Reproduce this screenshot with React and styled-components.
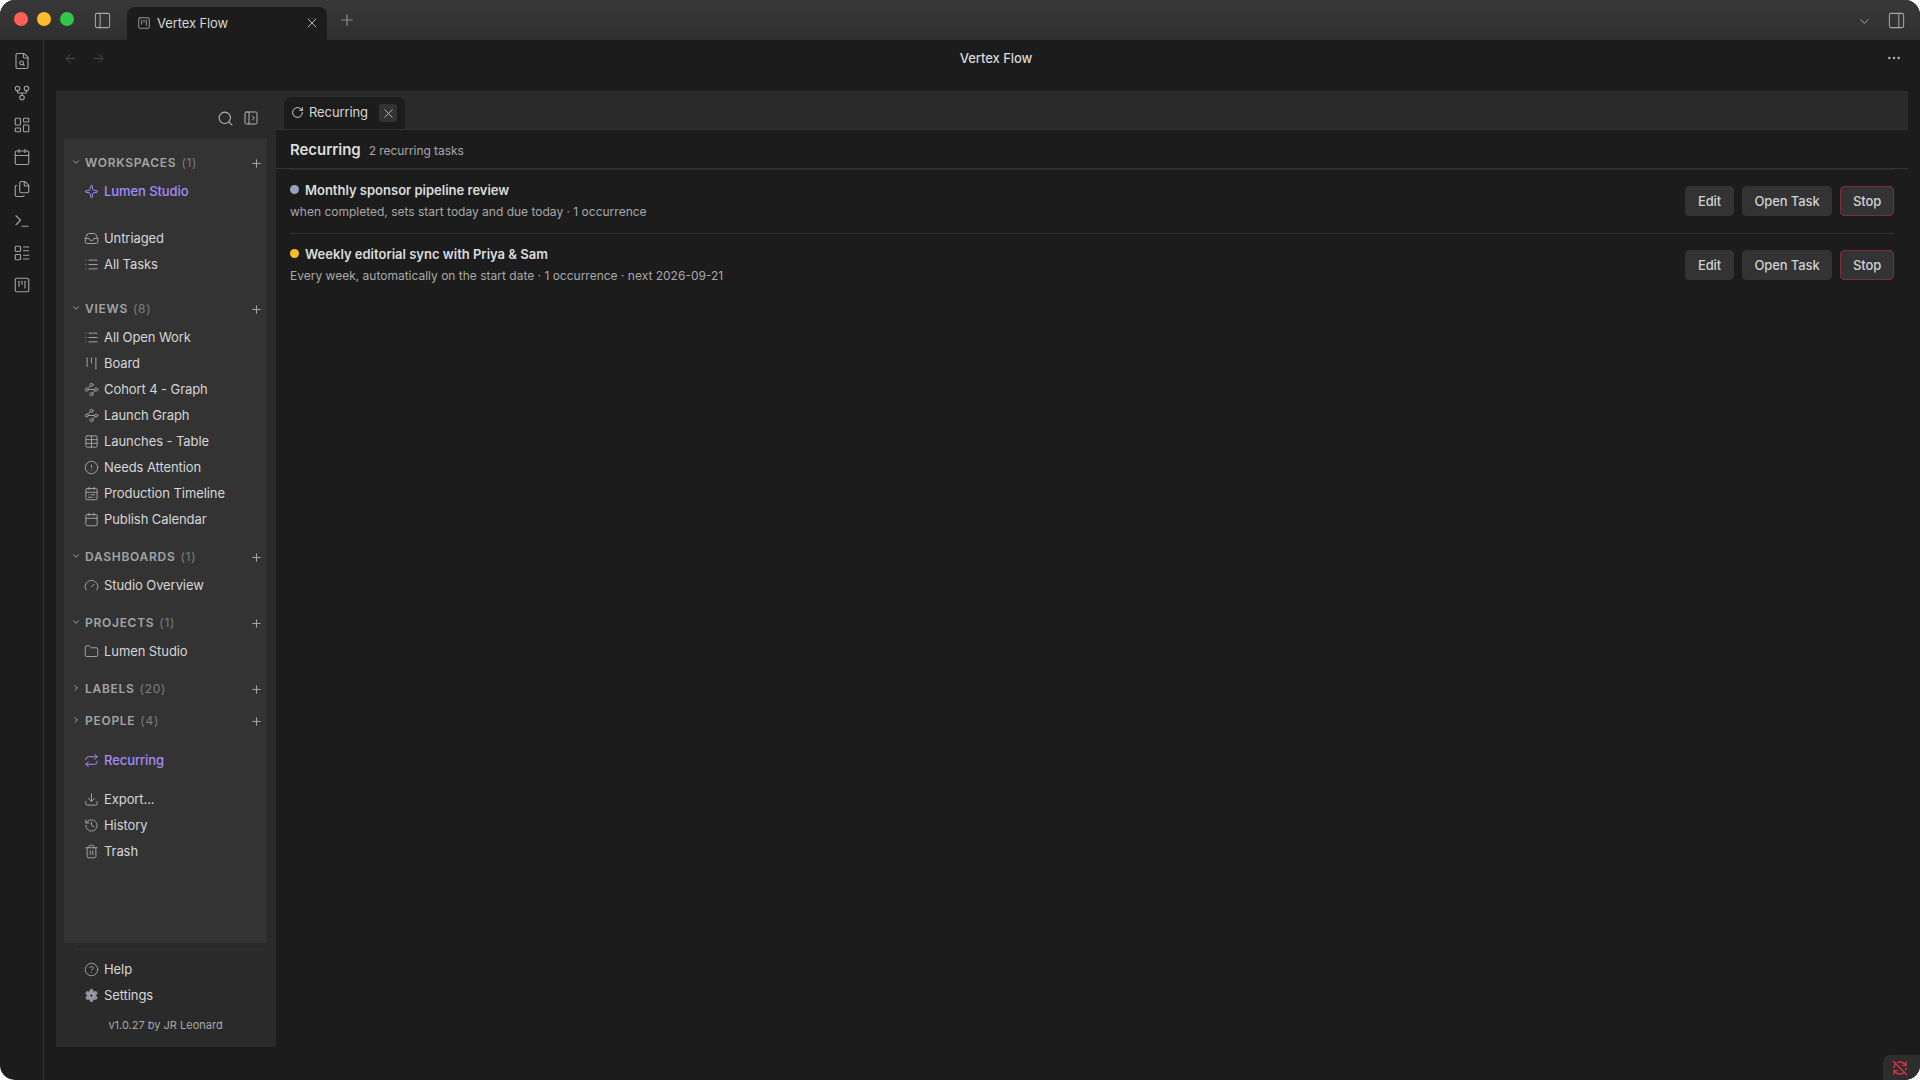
import React from "react";
import styled, { createGlobalStyle } from "styled-components";
import {
  FileSearch, GitFork, LayoutDashboard, Calendar, Files, Terminal, LayoutList, SquareKanban,
  PanelLeft, PanelRight, PanelLeftOpen, X, Plus, ChevronDown, ChevronRight, ArrowLeft, ArrowRight,
  MoreHorizontal, Search, Sparkle, Inbox, List, Kanban, Waypoints, Table, CircleAlert, CalendarRange,
  Gauge, Folder, Repeat, Download, History, Trash2, CircleHelp, Settings, RotateCw, RefreshCwOff,
} from "lucide-react";

const Global = createGlobalStyle`
  html, body { margin: 0; padding: 0; background: #fff; height: 100%; }
  * { box-sizing: border-box; }
  #root { height: 100%; }
  body { font-family: Inter, "Noto Sans", "Liberation Sans", sans-serif; -webkit-font-smoothing: antialiased; }
`;

const Window = styled.div`
  position: relative; width: 1920px; height: 1080px; border-radius: 15px; overflow: hidden;
  background: #1c1c1c; color: #dcdcdc; display: flex; flex-direction: column;
`;
const TitleBar = styled.header`
  height: 40px; flex: none; display: flex; align-items: flex-end; padding: 0 14px 0 14px;
  background: linear-gradient(#383838, #2f2f2f); color: #a8a8a8;
`;
const Lights = styled.div`display: flex; gap: 9px; align-self: center; margin-top: -2px; margin-right: 19px;`;
const Light = styled.span`width: 14px; height: 14px; border-radius: 50%; background: ${p => p.$c};`;
const BarButton = styled.span`
  display: flex; align-items: center; align-self: center; justify-content: center;
  margin-top: ${p => p.$mt || 0}px; margin-left: ${p => p.$ml || 0}px;
`;
const WinTab = styled.div`
  width: 200px; height: 33px; margin-left: 15px; background: #1c1c1c; border-radius: 8px 8px 0 0;
  display: flex; align-items: center; padding: 0 7px 2px 10px; gap: 6px; font-size: 13px;
  letter-spacing: -0.1px; color: #d6d6d6;
`;
const TabLabel = styled.span`flex: 1; white-space: nowrap;`;
const NewTab = styled.span`display: flex; align-self: center; margin-left: 11px; color: #8c8c8c;`;
const Spacer = styled.div`flex: 1;`;
const Body = styled.div`flex: 1; display: flex; min-height: 0;`;
const Rail = styled.nav`
  width: 44px; flex: none; border-right: 1px solid #333; padding: 5px 0 0 1px;
  display: flex; flex-direction: column; color: #a2a2a2;
`;
const RailItem = styled.span`height: 32px; display: flex; align-items: center; justify-content: center;`;
const Main = styled.div`flex: 1; min-width: 0; display: flex; flex-direction: column;`;
const NavRow = styled.div`
  height: 51px; flex: none; display: grid; grid-template-columns: 1fr auto 1fr; align-items: center;
  padding: 0 18px 15px 46px;
`;
const NavArrows = styled.div`display: flex; gap: 13px; color: #4e4e4e; margin-left: -27px;`;
const NavTitle = styled.div`font-size: 13px; font-weight: 500; letter-spacing: -0.05px; color: #d8d8d8;`;
const NavMore = styled.div`justify-self: end; display: flex; color: #b0b0b0;`;
const Workspace = styled.div`flex: 1; min-height: 0; display: flex; margin: 0 12px 33px 12px;`;
const Sidebar = styled.aside`
  width: 220px; flex: none; background: #2a2a2a; display: flex; flex-direction: column;
  padding: 0 9px 0 8px;
`;
const SideHead = styled.div`
  height: 48px; flex: none; display: flex; align-items: center; justify-content: flex-end;
  gap: 9px; padding: 6px 8px 0 0; color: #b4b4b4;
`;
const Card = styled.div`flex: 1; min-height: 0; background: #333; padding-top: 10px;`;
const SectionHead = styled.div`
  height: 26px; display: flex; align-items: center; padding: 0 4px 0 6px;
  margin-top: ${p => p.$mt || 0}px; margin-bottom: ${p => p.$mb ?? 3}px; color: #a4a4a4;
`;
const HeadChevron = styled.span`width: 11px; display: flex; justify-content: center; margin-right: 4px;`;
const HeadLabel = styled.span`font-size: 12px; font-weight: 600; letter-spacing: 0.06em;`;
const HeadCount = styled.span`font-size: 12px; color: #7e7e7e; letter-spacing: 0.06em; margin-left: 5px; flex: 1;`;
const HeadPlus = styled.span`display: flex; margin-top: 2px;`;
const Item = styled.div`
  height: 26px; display: flex; align-items: center; padding-left: 20px; gap: 5px; font-size: 13px;
  letter-spacing: -0.08px;
  margin-top: ${p => p.$mt || 0}px; color: ${p => (p.$active ? "#a68af9" : "#d6d6d6")};
  font-weight: ${p => (p.$active ? 500 : 400)};
  svg { color: ${p => (p.$active ? "#a68af9" : "#a0a0a0")}; flex: none; }
`;
const Foot = styled.div`flex: none; height: 104px; padding-top: 6px;`;
const Divider = styled.div`height: 1px; background: #333; margin: 0 2px 6px 10px;`;
const GearIcon = styled(Settings)`
  color: #8f959e !important; fill: #8f959e;
  circle { fill: #2a2a2a; stroke: #c0c4ca; }
`;
const Version = styled.div`font-size: 11px; color: #a8a8a8; text-align: center; margin-top: 10px;`;
const Content = styled.main`flex: 1; min-width: 0; display: flex; flex-direction: column;`;
const TabStrip = styled.div`
  height: 39px; flex: none; background: #2a2a2a; border-bottom: 1px solid #333; padding: 6px 0 0 8px; display: flex;
`;
const PaneTab = styled.div`
  width: 121px; background: #1c1c1c; border-radius: 8px 8px 0 0; display: flex; align-items: center;
  padding: 0 8px 2px 7px; gap: 5px; font-size: 13px; letter-spacing: -0.1px; color: #d6d6d6;
`;
const CloseBox = styled.span`
  width: 18px; height: 18px; background: #333; border-radius: 3px; display: flex; align-items: center;
  justify-content: center; color: #b4b4b4; margin-top: 2px;
`;
const PageHead = styled.div`
  height: 39px; flex: none; display: flex; align-items: center; gap: 8px; padding: 0 14px;
  border-bottom: 1px solid #333;
`;
const PageTitle = styled.h1`margin: 0; font-size: 15px; font-weight: 600; letter-spacing: -0.05px; color: #dcdcdc;`;
const PageCount = styled.span`font-size: 12px; letter-spacing: -0.05px; color: #a8a8a8; margin-top: 2px;`;
const Rows = styled.div`margin: 0 14px; border-top: 1px solid #2a2a2a;`;
const Row = styled.div`
  height: 64px; display: flex; align-items: center; justify-content: space-between;
  border-bottom: 1px solid ${p => (p.$last ? "transparent" : "#333")};
`;
const RowText = styled.div`display: flex; flex-direction: column; gap: 6px; margin-top: -3px;`;
const RowTitle = styled.div`display: flex; align-items: center; gap: 6px; font-size: 13px; font-weight: 600; color: #dcdcdc;`;
const Dot = styled.span`width: 9px; height: 9px; border-radius: 50%; background: ${p => p.$c};`;
const RowSub = styled.div`font-size: 12px; color: #a8a8a8; white-space: nowrap;`;
const Actions = styled.div`display: flex; gap: 8px; margin-top: -1px;`;
const Btn = styled.button`
  height: 30px; padding: 0; border-radius: 4px; font: 500 13px Inter, sans-serif; letter-spacing: -0.1px; color: #d0d0d0;
  background: #333; border: 1px solid ${p => (p.$danger ? "#7c2f37" : "#333")}; white-space: nowrap;
  width: ${p => p.$w}px; display: flex; align-items: center; justify-content: center;
`;
const SyncBadge = styled.div`
  position: absolute; right: 0; bottom: 0; width: 37px; height: 25px; background: #2d2d2d; padding-right: 3px;
  border-top-left-radius: 7px; display: flex; align-items: center; justify-content: center; color: #e0314b;
`;

const railIcons = [FileSearch, GitFork, LayoutDashboard, Calendar, Files, Terminal, LayoutList, SquareKanban];
const views = [
  [List, "All Open Work"], [Kanban, "Board"], [Waypoints, "Cohort 4 - Graph"], [Waypoints, "Launch Graph"],
  [Table, "Launches - Table"], [CircleAlert, "Needs Attention"], [CalendarRange, "Production Timeline"], [Calendar, "Publish Calendar"],
];
const rows = [
  { c: "#97a3bd", t: "Monthly sponsor pipeline review", s: "when completed, sets start today and due today · 1 occurrence" },
  { c: "#f5bd2a", t: "Weekly editorial sync with Priya & Sam", s: "Every week, automatically on the start date · 1 occurrence · next 2026-09-21" },
];

const Entry = ({ icon: Icon, label, active, mt }) => (
  <Item $active={active} $mt={mt}><Icon size={15} strokeWidth={1.6} />{label}</Item>
);
const Head = ({ label, count, open = true, mt, mb }) => (
  <SectionHead $mt={mt} $mb={mb}>
    <HeadChevron>{open ? <ChevronDown size={10} strokeWidth={2.4} /> : <ChevronRight size={10} strokeWidth={2.4} />}</HeadChevron>
    <HeadLabel>{label}</HeadLabel>
    <HeadCount>({count})</HeadCount>
    <HeadPlus><Plus size={13} strokeWidth={2} /></HeadPlus>
  </SectionHead>
);

export default function App() {
  return (
    <Window>
      <Global />
      <TitleBar>
        <Lights>
          <Light $c="#fe5f57" /><Light $c="#febc2e" /><Light $c="#30c84a" />
        </Lights>
        <BarButton><PanelLeft size={19} strokeWidth={1.3} /></BarButton>
        <WinTab>
          <SquareKanban size={14} strokeWidth={1.5} color="#a8a8a8" />
          <TabLabel>Vertex Flow</TabLabel>
          <X size={16} strokeWidth={1.5} color="#b8b8b8" />
        </WinTab>
        <NewTab><Plus size={18} strokeWidth={1.6} /></NewTab>
        <Spacer />
        <BarButton $mt={2}><ChevronDown size={15} strokeWidth={1.6} /></BarButton>
        <BarButton $ml={15}><PanelRight size={19} strokeWidth={1.3} /></BarButton>
      </TitleBar>
      <Body>
        <Rail>
          {railIcons.map((I, i) => <RailItem key={i}><I size={18} strokeWidth={1.5} /></RailItem>)}
        </Rail>
        <Main>
          <NavRow>
            <NavArrows><ArrowLeft size={15} strokeWidth={1.4} /><ArrowRight size={15} strokeWidth={1.4} /></NavArrows>
            <NavTitle>Vertex Flow</NavTitle>
            <NavMore><MoreHorizontal size={16} strokeWidth={1.8} /></NavMore>
          </NavRow>
          <Workspace>
            <Sidebar>
              <SideHead>
                <Search size={17} strokeWidth={1.5} />
                <PanelLeftOpen size={16} strokeWidth={1.5} />
              </SideHead>
              <Card>
                <Head label="WORKSPACES" count={1} />
                <Entry icon={Sparkle} label="Lumen Studio" active />
                <Entry icon={Inbox} label="Untriaged" mt={21} />
                <Entry icon={List} label="All Tasks" />
                <Head label="VIEWS" count={8} mt={18} />
                {views.map(([I, l]) => <Entry key={l} icon={I} label={l} />)}
                <Head label="DASHBOARDS" count={1} mt={11} />
                <Entry icon={Gauge} label="Studio Overview" />
                <Head label="PROJECTS" count={1} mt={11} />
                <Entry icon={Folder} label="Lumen Studio" />
                <Head label="LABELS" count={20} open={false} mt={11} mb={0} />
                <Head label="PEOPLE" count={4} open={false} mt={6} mb={0} />
                <Entry icon={Repeat} label="Recurring" active mt={14} />
                <Entry icon={Download} label="Export..." mt={13} />
                <Entry icon={History} label="History" />
                <Entry icon={Trash2} label="Trash" />
              </Card>
              <Foot>
                <Divider />
                <Item><CircleHelp size={15} strokeWidth={1.5} />Help</Item>
                <Item><GearIcon size={15} strokeWidth={1.5} />Settings</Item>
                <Version>v1.0.27 by JR Leonard</Version>
              </Foot>
            </Sidebar>
            <Content>
              <TabStrip>
                <PaneTab>
                  <RotateCw size={13} strokeWidth={1.8} />
                  <TabLabel>Recurring</TabLabel>
                  <CloseBox><X size={15} strokeWidth={1.5} /></CloseBox>
                </PaneTab>
              </TabStrip>
              <PageHead>
                <PageTitle>Recurring</PageTitle>
                <PageCount>2 recurring tasks</PageCount>
              </PageHead>
              <Rows>
                {rows.map((r, i) => (
                  <Row key={r.t} $last={i === rows.length - 1}>
                    <RowText>
                      <RowTitle><Dot $c={r.c} />{r.t}</RowTitle>
                      <RowSub>{r.s}</RowSub>
                    </RowText>
                    <Actions>
                      <Btn $w={49}>Edit</Btn>
                      <Btn $w={90}>Open Task</Btn>
                      <Btn $w={54} $danger>Stop</Btn>
                    </Actions>
                  </Row>
                ))}
              </Rows>
            </Content>
          </Workspace>
        </Main>
      </Body>
      <SyncBadge><RefreshCwOff size={16} strokeWidth={2} /></SyncBadge>
    </Window>
  );
}
